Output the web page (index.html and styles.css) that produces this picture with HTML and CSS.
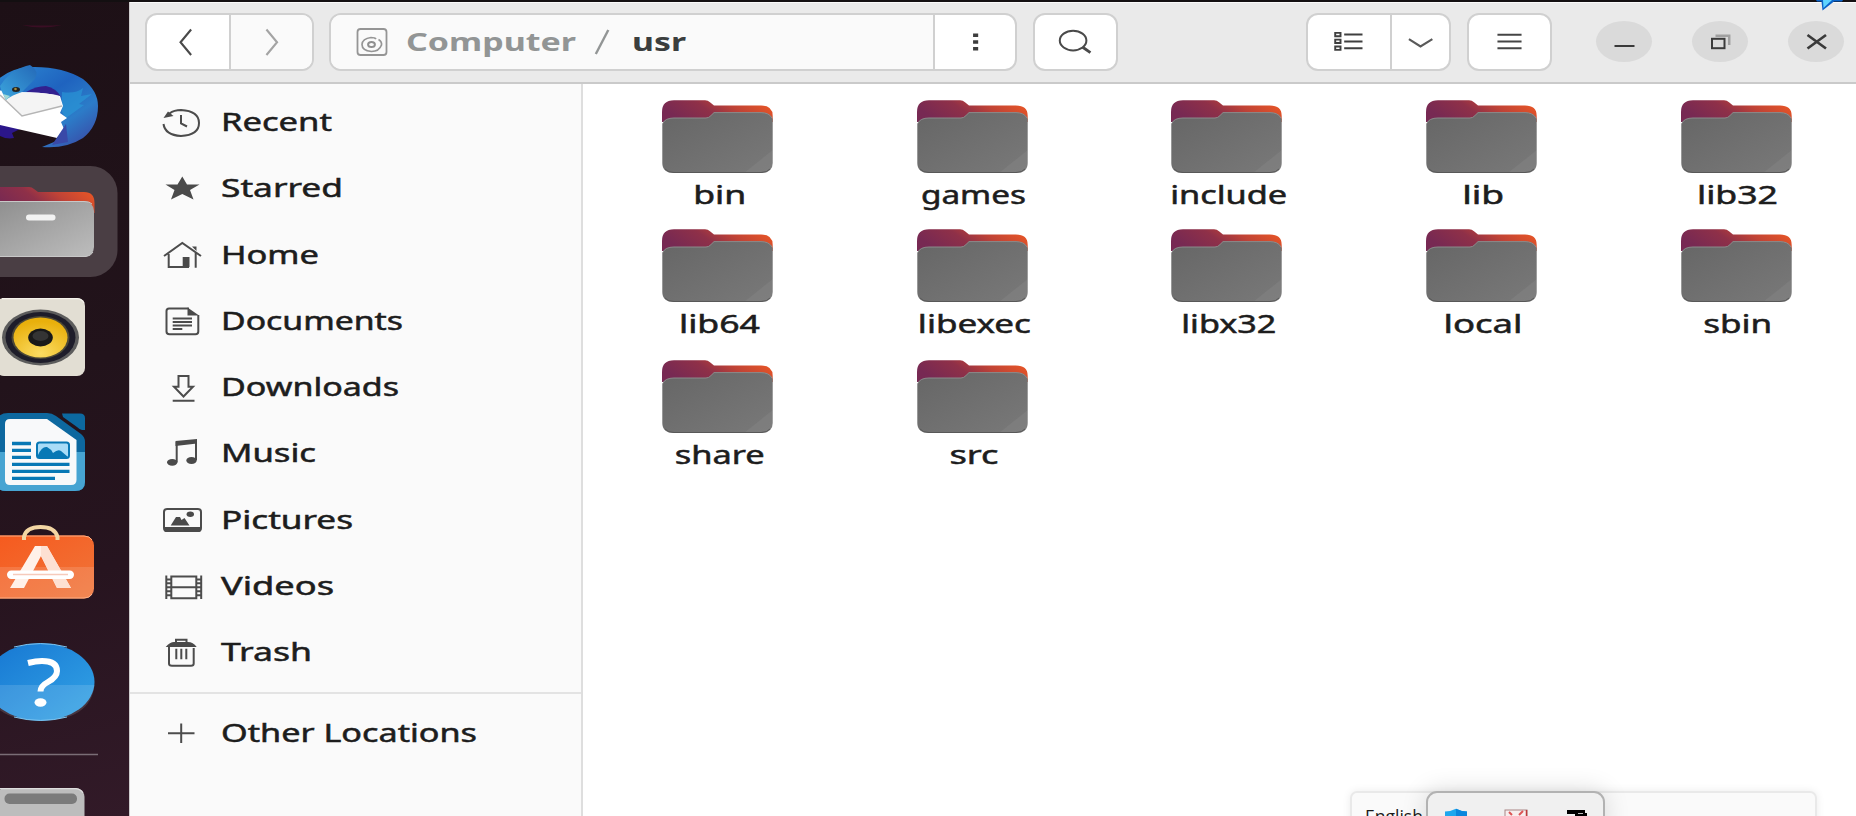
FILE: index.html
```
<!DOCTYPE html>
<html lang="en">
<head>
<meta charset="utf-8">
<title>usr</title>
<link rel="stylesheet" href="styles.css">
</head>
<body>
<svg class="defs" width="0" height="0" aria-hidden="true">
  <defs>
    <linearGradient id="tab" x1="0" y1="0.3" x2="1" y2="0">
      <stop offset="0" stop-color="#772953"/><stop offset=".35" stop-color="#8f3048"/><stop offset=".6" stop-color="#c04336"/><stop offset="1" stop-color="#f15a22"/>
    </linearGradient>
    <linearGradient id="front" x1="0" y1="0" x2="1" y2="1">
      <stop offset="0" stop-color="#666"/><stop offset="1" stop-color="#797979"/>
    </linearGradient>
    <linearGradient id="silver" x1="0" y1="0" x2="1" y2="1">
      <stop offset="0" stop-color="#8c8c8c"/><stop offset="1" stop-color="#bdbdbd"/>
    </linearGradient>
    <linearGradient id="bird" x1="0" y1="0" x2="1" y2="1">
      <stop offset="0" stop-color="#2f8fd6"/><stop offset=".45" stop-color="#1f63bf"/><stop offset=".7" stop-color="#2c7cc8"/><stop offset="1" stop-color="#3c3f9f"/>
    </linearGradient>
    <linearGradient id="head" x1="0" y1="1" x2="1" y2="0">
      <stop offset="0" stop-color="#3ba6de"/><stop offset="1" stop-color="#2469b8"/>
    </linearGradient>
    <radialGradient id="cone" cx=".5" cy=".9" r=".8">
      <stop offset="0" stop-color="#fbdc62"/><stop offset="1" stop-color="#e9b00c"/>
    </radialGradient>
    <linearGradient id="bag" x1="0" y1="0" x2="1" y2="1">
      <stop offset="0" stop-color="#f6591d"/><stop offset="1" stop-color="#f0753a"/>
    </linearGradient>
    <linearGradient id="help" x1="0" y1="0" x2="1" y2="1">
      <stop offset="0" stop-color="#1676d2"/><stop offset="1" stop-color="#33a4e6"/>
    </linearGradient>
    <symbol id="folder" viewBox="0 0 111 74">
      <path d="M0 24V12Q0 .3 12 .3H43Q46 .3 48 2.300L52 5.600H99Q110.700 5.600 110.700 16V22H0Z" fill="url(#tab)"/>
      <path d="M.3 24Q2 18 12 18H44Q47 18 49 15.500L52 12.600H99Q108 12.600 110.700 19V63Q110.700 73 99 73H12Q.3 73 .3 63Z" fill="url(#front)"/>
      <path d="M.8 23.500Q3 18 12 18H44Q47 18 49 15.500L52 12.600H99Q107 12.600 110 18" fill="none" stroke="#8b8b8b" stroke-width="1"/>
      <path d="M110.700 50V63Q110.700 73 99 73H82Z" fill="#fff" opacity=".05"/>
      <path d="M3 69Q6 72.500 12 72.500H99Q105 72.500 108 69" fill="none" stroke="#585858" stroke-width="1"/>
    </symbol>
  </defs>
</svg>

<div class="screen">
  <nav class="dock">
    <svg class="dock-item" viewBox="0 0 129 160" height="160">
      <path d="M22 25Q41 26 62 25Q41 30 22 25Z" fill="#3a0e24"/>
      <path d="M-14 92Q4 68 30 67Q62 66 83 79Q98 91 98 106Q98 126 83 138Q66 149 42 147L54 142Q64 139 60 128L-16 118Z" fill="url(#bird)"/>
      <path d="M62 92Q76 94 83 88L81 96L92 94L79 104L84 105L66 118L62 112Z" fill="#299bd9" opacity=".6"/>
      <path d="M-4 124L22 128L12 133L14 138Q4 140-6 132Z" fill="#2b168a"/>
      <path d="M26 92Q36 86 46 86Q56 88 61 97L40 94Z" fill="#32208f"/>
      <path d="M-4 90L16 92Q44 92 60 96L63 106L60 113L67 118L61 122L64 129L57 138L-4 124Z" fill="#fff"/>
      <path d="M14 93Q44 91 59 96L62 106L22 116L3 96Z" fill="#f4f4f4"/>
      <path d="M0 95L22 116L62 106" fill="none" stroke="#b5b5b5" stroke-width="1.500"/>
      <path d="M0 86Q10 70 26 66L30 65L34 68Q40 75 32 82L22 92Q12 95 6 100L2 92Z" fill="url(#head)"/>
      <path d="M3 94L10 96L6 100Z" fill="#9fd8d5"/>
      <ellipse cx="16" cy="89.500" rx="4" ry="2.500" fill="#222"/><circle cx="15.500" cy="89" r="1.300" fill="#a58b3a"/>
      <path d="M56 139L66 124L68 142L52 145Z" fill="#3949a8"/>
    </svg>
    <svg class="dock-item" viewBox="0 160 129 122" height="122">
      <rect x="-30" y="166" width="147.500" height="111" rx="27" fill="#4a3e44"/>
      <path d="M-10 187H29Q32 187 34 189L38 192H84Q94.500 192 94.500 203V213H-10Z" fill="url(#tab)"/>
      <rect x="-15" y="201" width="109" height="56" rx="10" fill="url(#silver)"/>
      <path d="M-2 201.500H84Q90 201.500 92 204M-2 256.500H86Q91 256 93 252" stroke="#c8c8c8" stroke-width="1" fill="none"/>
      <rect x="26" y="214.500" width="29.500" height="6" rx="3" fill="#f2f2f2"/>
    </svg>
    <svg class="dock-item" viewBox="0 282 129 118" height="118">
      <rect x="-4" y="298" width="89" height="78" rx="8" fill="#e2ded3"/>
      <path d="M2 298.700H77Q82 299 84 303" stroke="#f5f3ec" stroke-width="1.200" fill="none"/>
      <ellipse cx="40.500" cy="337.500" rx="38.500" ry="28" fill="#5c5c5c"/>
      <ellipse cx="40.500" cy="337.500" rx="35" ry="25.500" fill="#1e1d2a"/>
      <ellipse cx="40.500" cy="337.500" rx="29" ry="21.500" fill="#4d4937"/>
      <ellipse cx="40.500" cy="337.500" rx="27" ry="20" fill="url(#cone)"/>
      <ellipse cx="40.500" cy="337.500" rx="12.300" ry="9" fill="#191919"/>
      <ellipse cx="40.500" cy="336" rx="8" ry="5" fill="#343434"/>
    </svg>
    <svg class="dock-item" viewBox="0 400 129 110" height="110">
      <path d="M-4 422Q-2 413 8 413H47Q52 413 56 416L81 434Q85 437 85 442V482Q85 491 75 491H6Q-4 491-4 482Z" fill="#0d689f"/>
      <path d="M-4 452H85V482Q85 491 75 491H6Q-4 491-4 482Z" fill="#47a4d2"/>
      <path d="M62 413.500H80Q85 413.500 85 418V430H82Q80 430 77 427L63 417Z" fill="#0c69a0"/>
      <path d="M5 424Q5 419 10 419H47L76.500 440V480Q76.500 485 71 485H10Q5 485 5 480Z" fill="#f8f9fa"/>
      <path d="M12 443.500H31M12 450.300H31M12 457.300H31M12 464.300H69.500M12 471.300H69.500M12 478.300H55" stroke="#0878b5" stroke-width="3.300"/>
      <rect x="37" y="442.500" width="32" height="15.500" rx="2.500" fill="#a9dcf7" stroke="#0878b5" stroke-width="2"/>
      <path d="M38 455Q42 446 47 447Q51 449 53 453Q58 449 61 451L68 457V458H38Z" fill="#0878b5"/>
    </svg>
    <svg class="dock-item" viewBox="0 510 129 110" height="110">
      <rect x="-12" y="535.500" width="106" height="63" rx="10" fill="url(#bag)"/>
      <path d="M-2 567H94V588.500Q94 598.500 84 598.500H-2Z" fill="#fff" opacity=".13"/>
      <path d="M-2 536H84Q90 536 92 540M-2 598H84Q90 598 92 594" fill="none" stroke="#ffad82"/>
      <path d="M24 540V537Q26 527 40.500 527Q55 527 57.500 537V540" fill="none" stroke="#f3d6a3" stroke-width="4"/>
      <path d="M35 546H47L71 588H57L41 556L24 588H10Z" fill="#fff1e9"/>
      <path d="M41 546H47L71 588H57L41 556Z" fill="#fde0d2"/>
      <rect x="7" y="570.500" width="67" height="8.500" rx="4.200" fill="#fff"/>
      <path d="M13 574.500H68" stroke="#f6cabb" stroke-width="1.500"/>
    </svg>
    <svg class="dock-item" viewBox="0 620 129 120" height="120">
      <ellipse cx="40.500" cy="682" rx="54" ry="39" fill="url(#help)"/>
      <path d="M-14 685H94.500Q91 720 40.500 721Q-10 720-14 685Z" fill="#fff" opacity=".13"/>
      <path d="M14 647Q27 643.600 40.500 643.600Q54 643.600 67 647M14 717Q27 720.400 40.500 720.400Q54 720.400 67 717" stroke="#7cc4f0" stroke-width="1" fill="none"/>
      <path d="M28 663Q36 661 42 661Q57 661 57 671Q57 677 48 682Q40.500 686 40.500 691.500" fill="none" stroke="#fff" stroke-width="6"/>
      <ellipse cx="40.500" cy="702.500" rx="6" ry="4.200" fill="#fff"/>
    </svg>
    <svg class="dock-item" viewBox="0 740 129 76" height="76">
      <path d="M0 754.500H98" stroke="#7a6d76" stroke-width="1.300"/>
      <rect x="-4" y="788" width="88.500" height="50" rx="9" fill="#bdbdbd"/>
      <path d="M0 788.600H76Q81 789 83 793" stroke="#dedede" stroke-width="1.200" fill="none"/>
      <rect x="4.500" y="793.500" width="72.500" height="10.500" rx="5" fill="#7b7b7b"/>
    </svg>
  </nav>

  <main class="window">
    <header class="bar">
      <div class="group nav-group">
        <svg class="btn" viewBox="147 14 83 56"><path d="M192 29L181 42.300L192 55.500" stroke="#4a4a4a" stroke-width="2.200"/></svg>
        <svg class="btn off" viewBox="231 14 83 56"><path d="M267 29L278 42.300L267 55.500" stroke="#a4a4a4" stroke-width="2.200"/></svg>
      </div>
      <div class="group path-group">
        <div class="crumbs">
          <svg class="disk" viewBox="355 27 32 30">
            <rect x="356.500" y="29" width="29" height="26" rx="3" stroke="#959595" stroke-width="1.800"/>
            <path d="M377.500 39.500Q381 41.500 380.500 45Q378 51.500 370.500 51.500Q361 50.500 361 44.500Q361.500 38.500 370 37.500Q374 37.500 375 39" stroke="#959595" stroke-width="1.700"/>
            <ellipse cx="370.500" cy="44.500" rx="3.400" ry="2.500" stroke="#8f8f8f" stroke-width="2"/>
          </svg>
          <span class="crumb dim" data-w="170">Computer</span>
          <svg class="slash" viewBox="0 0 16 30"><path d="M14.300 3L1.800 27" stroke="#929595" stroke-width="2.400"/></svg>
          <span class="crumb here" data-w="54">usr</span>
        </div>
        <svg class="btn more" viewBox="932.500 14 83 56"><path d="M972 35H977.300M972 42H977.300M972 49H977.300" stroke="#3d3d3d" stroke-width="3.600"/></svg>
      </div>
      <div class="group search-group">
        <svg class="btn" viewBox="1034 14 83 56"><ellipse cx="1073" cy="40.500" rx="13.800" ry="10.200" stroke="#4a4a4a" stroke-width="2.100"/><path d="M1083 47.500L1091 53" stroke="#4a4a4a" stroke-width="3"/></svg>
      </div>
      <div class="group view-group">
        <svg class="btn" viewBox="1308 14 83 56"><path d="M1335.200 32.500h5.500v3.500h-5.500zM1335.200 39.500h5.500v3.500h-5.500zM1335.200 46.700h5.500v3.500h-5.500zM1344.500 34.300H1363.500M1344.500 41.400H1363.500M1344.500 48.400H1363.500" stroke="#3f3f3f" stroke-width="2"/></svg>
        <svg class="btn" viewBox="1391.500 14 59 56"><path d="M1409 39L1421 46.500L1433.300 39" stroke="#5a5a5a" stroke-width="2.300"/></svg>
      </div>
      <div class="group menu-group">
        <svg class="btn" viewBox="1468 14 83 56"><path d="M1497 34.400H1522M1497 41.400H1522M1497 48.400H1522" stroke="#454545" stroke-width="2"/></svg>
      </div>
      <div class="controls">
        <svg class="ctl" viewBox="1596.500 21.500 56 41"><path d="M1615 46.500H1635" stroke="#3a3a3a" stroke-width="2"/></svg>
        <svg class="ctl" viewBox="1692.500 21.500 56 41"><path d="M1716 36.300H1729.700V45.500" stroke="#a0a0a0" stroke-width="2.500"/><rect x="1712.500" y="39.300" width="12.500" height="9.400" stroke="#3a3a3a" stroke-width="2"/></svg>
        <svg class="ctl" viewBox="1788.500 21.500 56 41"><path d="M1808 35.500L1826.500 49M1826.500 35.500L1808 49" stroke="#3a3a3a" stroke-width="2.700"/></svg>
      </div>
    </header>

    <div class="body">
      <aside class="places">
        <div class="row"><svg class="ico" viewBox="0 0 44 32"><path d="M9.500 7.500Q14 4 21 4Q39 5 39 17Q39 29 21 30Q5 29 3.500 18" class="ln"/><path d="M21 9V17.500L27 20.500" class="ln"/><path d="M8 5.500L3.500 12L13.500 10Z" class="fl"/></svg><span class="name" data-w="111">Recent</span></div>
        <div class="row"><svg class="ico" viewBox="0 0 44 32"><path d="M22.300 4.500L27 12.500H39.500L30 18L33.500 27.500L22.300 22L11 27.500L14.500 18L5.500 12.500H17.500Z" class="fl"/></svg><span class="name" data-w="122">Starred</span></div>
        <div class="row"><svg class="ico" viewBox="0 0 44 32"><path d="M4 17L22.300 4L41 17M8.700 15V28H29M35.700 14V28.700" class="ln"/><path d="M22.700 18H29.500V28H22.700ZM32 7.500H36.500V12Z" class="fl"/></svg><span class="name" data-w="98">Home</span></div>
        <div class="row"><svg class="ico" viewBox="0 0 44 32"><path d="M29 3.500H9Q6.500 3.500 6.500 6V26.500Q6.500 29.300 9.500 29.300H35.500Q38.300 29.300 38.300 26.500V10" class="ln"/><path d="M27.500 2.500L39 10.500H27.500Z" class="fl"/><path d="M12.700 13.500H32M12.700 17H32M12.700 20.500H32M12.700 24H22.300" class="ln"/></svg><span class="name" data-w="182">Documents</span></div>
        <div class="row"><svg class="ico" viewBox="0 0 44 32"><path d="M18.500 5H28.500V15.700H33L23.500 25.500L14 15.700H18.500ZM12.700 29.700H34.500" class="ln"/></svg><span class="name" data-w="178">Downloads</span></div>
        <div class="row"><svg class="ico" viewBox="0 0 44 32"><path d="M16.700 25V5M36 23V4" class="ln"/><path d="M15.500 4L37 2V6.500L15.500 9Z" class="fl"/><ellipse cx="12.200" cy="25.300" rx="5.200" ry="3.400" class="fl"/><ellipse cx="31.500" cy="23.500" rx="5.200" ry="3.400" class="fl"/></svg><span class="name" data-w="95">Music</span></div>
        <div class="row"><svg class="ico" viewBox="0 0 44 32"><rect x="4" y="5" width="37" height="22" rx="3" class="ln"/><path d="M4 23H41V26Q41 28 38 28H7Q4 28 4 26ZM10.700 21.500L16 13H20L21.500 16L24.500 14L29.500 21.500Z" class="fl"/><ellipse cx="30.300" cy="10.300" rx="3.700" ry="2.700" class="fl"/></svg><span class="name" data-w="132">Pictures</span></div>
        <div class="row"><svg class="ico" viewBox="0 0 44 32"><path d="M11.300 6.500H36.300V28.300H11.300ZM11.300 17.300H36.300M6.300 5.500V29M41.200 5.500V29" class="ln"/><path d="M6 9.500H11M6 13.300H11M6 17.300H11M6 21.300H11M6 25.200H11M36.500 9.500H41M36.500 13.300H41M36.500 17.300H41M36.500 21.300H41M36.500 25.200H41" class="ln"/></svg><span class="name" data-w="113">Videos</span></div>
        <div class="row"><svg class="ico" viewBox="0 0 44 32"><path d="M9 10V27.500Q9 29.700 12 29.700H31Q33.700 29.700 33.700 27.500V12M16.300 12.700V23.300M21.300 12.700V23.300M26.300 12.700V23.300M16 7V3.800H26.500V7" class="ln"/><path d="M5.700 11Q10 6 14 6H28Q33 6 36.700 11Z" class="fl"/></svg><span class="name" data-w="91">Trash</span></div>
        <div class="row other"><svg class="ico" viewBox="0 0 44 32"><path d="M8 15.300H34.500M21.200 5.500V25" class="ln"/></svg><span class="name" data-w="256">Other Locations</span></div>
      </aside>
      <section class="files">
        <div class="file"><svg class="fold"><use href="#folder"/></svg><span class="label" data-w="53">bin</span></div>
        <div class="file"><svg class="fold"><use href="#folder"/></svg><span class="label" data-w="105">games</span></div>
        <div class="file"><svg class="fold"><use href="#folder"/></svg><span class="label" data-w="117">include</span></div>
        <div class="file"><svg class="fold"><use href="#folder"/></svg><span class="label" data-w="42">lib</span></div>
        <div class="file"><svg class="fold"><use href="#folder"/></svg><span class="label" data-w="81">lib32</span></div>
        <div class="file"><svg class="fold"><use href="#folder"/></svg><span class="label" data-w="81">lib64</span></div>
        <div class="file"><svg class="fold"><use href="#folder"/></svg><span class="label" data-w="113">libexec</span></div>
        <div class="file"><svg class="fold"><use href="#folder"/></svg><span class="label" data-w="95">libx32</span></div>
        <div class="file"><svg class="fold"><use href="#folder"/></svg><span class="label" data-w="79">local</span></div>
        <div class="file"><svg class="fold"><use href="#folder"/></svg><span class="label" data-w="69">sbin</span></div>
        <div class="file"><svg class="fold"><use href="#folder"/></svg><span class="label" data-w="90">share</span></div>
        <div class="file"><svg class="fold"><use href="#folder"/></svg><span class="label" data-w="49">src</span></div>
      </section>
    </div>
  </main>

  <svg class="pointer" viewBox="1814 0 32 12"><path d="M1816 0H1843L1842 1.500H1834L1822.500 10.500L1821.500 1.500H1817Z" fill="#0a63c9"/><path d="M1823 0H1832L1823.500 8Z" fill="#5fd4ff"/></svg>

  <div class="lang"><span class="lang-name">English</span></div>
  <div class="tray">
    <svg class="tray-icons" viewBox="1427 792 177 24">
      <path d="M1445 816V811.500Q1451 811.500 1456 808.800Q1461 811.500 1467 811.500V816Z" fill="#1ea7ee"/><path d="M1456 808.800Q1461 811.500 1467 811.500V816H1456Z" fill="#0b86dd"/>
      <rect x="1505" y="810" width="22" height="12" fill="#f7eeee" stroke="#a98585"/><path d="M1509 812L1512 815M1523 811L1519 815" stroke="#dd5555" stroke-width="2"/><path d="M1526.500 810V816" stroke="#c03a3a" stroke-width="1.500"/>
      <path d="M1567 810H1585V813H1587V816H1575V814H1567Z" fill="#000"/><path d="M1578 813.500H1583" stroke="#bbb" stroke-width="1"/>
    </svg>
  </div>
</div>
<script src="fit.js"></script>
</body>
</html>
```
FILE: styles.css
```
* { box-sizing: border-box; }
body { margin: 0; overflow: hidden; font-family: "Noto Sans", "Open Sans", sans-serif; }
.defs { position: absolute; }
.screen { position: relative; display: flex; width: 1856px; height: 816px; overflow: hidden; background: #141012; }
.dock { width: 129px; flex: none; display: flex; flex-direction: column; background: linear-gradient(165deg, #1d1016 0%, #22131b 45%, #27141f 70%, #321a28 100%); border-top: 2px solid #130f11; }
.dock-item { display: block; width: 129px; flex: none; }
.dock-item:first-child { margin-top: -2px; }

.window { flex: 1; margin-top: 2px; border-left: 1px solid #cfcdce; display: flex; flex-direction: column; background: #fff; }
.bar { height: 82px; flex: none; display: flex; align-items: flex-start; padding: 11px 0 0 15px; background: #eaeaea; border-bottom: 2px solid #cacaca; box-shadow: inset 0 1px #fafafa; }
.group { display: flex; height: 58px; border: 2px solid #d0d0d0; border-radius: 12px; background: #fff; overflow: hidden; flex: none; }
.group svg, .ctl { fill: none; }
.btn { display: block; flex: 1; height: 54px; min-width: 0; }
.btn + .btn, .more { border-left: 2px solid #d0d0d0; }
.off { background: #fafafa; }
.nav-group { width: 169px; margin-right: 15px; }
.path-group { width: 688px; margin-right: 16px; }
.crumbs { width: 602px; display: flex; align-items: center; background: #fafafa; padding-left: 25px; }
.more { flex: none; width: 82px; }
.disk { width: 32px; height: 30px; margin-right: 18px; }
.crumb { font-size: 25px; font-weight: 700; line-height: 52px; margin-top: -2px; white-space: pre; transform-origin: 0 50%; }
.dim { color: #929595; }
.here { color: #3b3e3e; }
.slash { width: 16px; height: 30px; margin: 0 22px 0 18px; }
.search-group { width: 85px; margin-right: 188px; }
.view-group { width: 145px; margin-right: 16px; }
.view-group .btn:first-child { flex: 0 0 82px; }
.menu-group { width: 85px; margin-right: 44px; }
.controls { display: flex; gap: 40px; padding-top: 8px; }
.ctl { width: 56px; height: 41px; border-radius: 50%; background: #dadada; flex: none; }

.body { flex: 1; display: flex; min-height: 0; }
.places { width: 453px; flex: none; padding-top: 5px; background: #fafafa; border-right: 2px solid #dedede; }
.row { height: 66.250px; display: flex; align-items: center; padding-left: 30px; }
.other { height: 83px; margin-top: 7px; border-top: 2px solid #e3e3e3; }
.ico { width: 44px; height: 32px; margin-right: 17px; flex: none; }
.ln { fill: none; stroke: #4c4c4c; stroke-width: 2; }
.fl { fill: #4a4a4a; }
.name, .label { font-size: 25px; line-height: 32px; color: #1d1d1d; white-space: pre; transform-origin: 0 50%; -webkit-text-stroke: .5px #1d1d1d; }
.name { margin-top: -2px; }
.other .ico { margin-top: -2px; }
.other .name { margin-top: -5px; }

.files { flex: 1; display: grid; grid-template-columns: repeat(5, 254.600px); grid-template-rows: 129px 130.500px 130px; align-content: start; padding: 16px 0 0 7.500px; overflow: hidden; }
.file { display: flex; flex-direction: column; align-items: center; }
.fold { width: 111px; height: 74px; flex: none; }
.label { transform-origin: 50% 50%; margin: 4px 0 0 3px; }

.pointer { position: absolute; left: 1814px; top: 0; width: 32px; height: 12px; }
.lang { position: absolute; left: 1350px; top: 791px; width: 467px; height: 60px; padding: 12px 0 0 13px; background: #fafafa; border: 2px solid #e9e9e9; border-radius: 7px; box-shadow: 0 0 8px rgba(0, 0, 0, .08); }
.lang-name { display: block; font: 17.500px/22px "Open Sans", sans-serif; color: #1a1a1a; }
.tray { position: absolute; left: 1426px; top: 791px; width: 179px; height: 60px; background: #f0f0f0; border: 2px solid #b2b2b2; border-radius: 11px; box-shadow: 0 0 26px rgba(0, 0, 0, .14); }
.tray-icons { display: block; width: 177px; height: 24px; margin: -1px 0 0 -1px; }
```
FILE: fit.js
```
// Stretch each caption horizontally to the width given in data-w.
document.querySelectorAll('[data-w]').forEach(function (el) {
  var natural = el.getBoundingClientRect().width;
  var wanted = parseFloat(el.dataset.w);
  el.style.transform = 'scaleX(' + (wanted / natural).toFixed(4) + ')';
  if (el.classList.contains('crumb')) {
    el.style.marginRight = (wanted - natural).toFixed(2) + 'px';
  }
});
```
